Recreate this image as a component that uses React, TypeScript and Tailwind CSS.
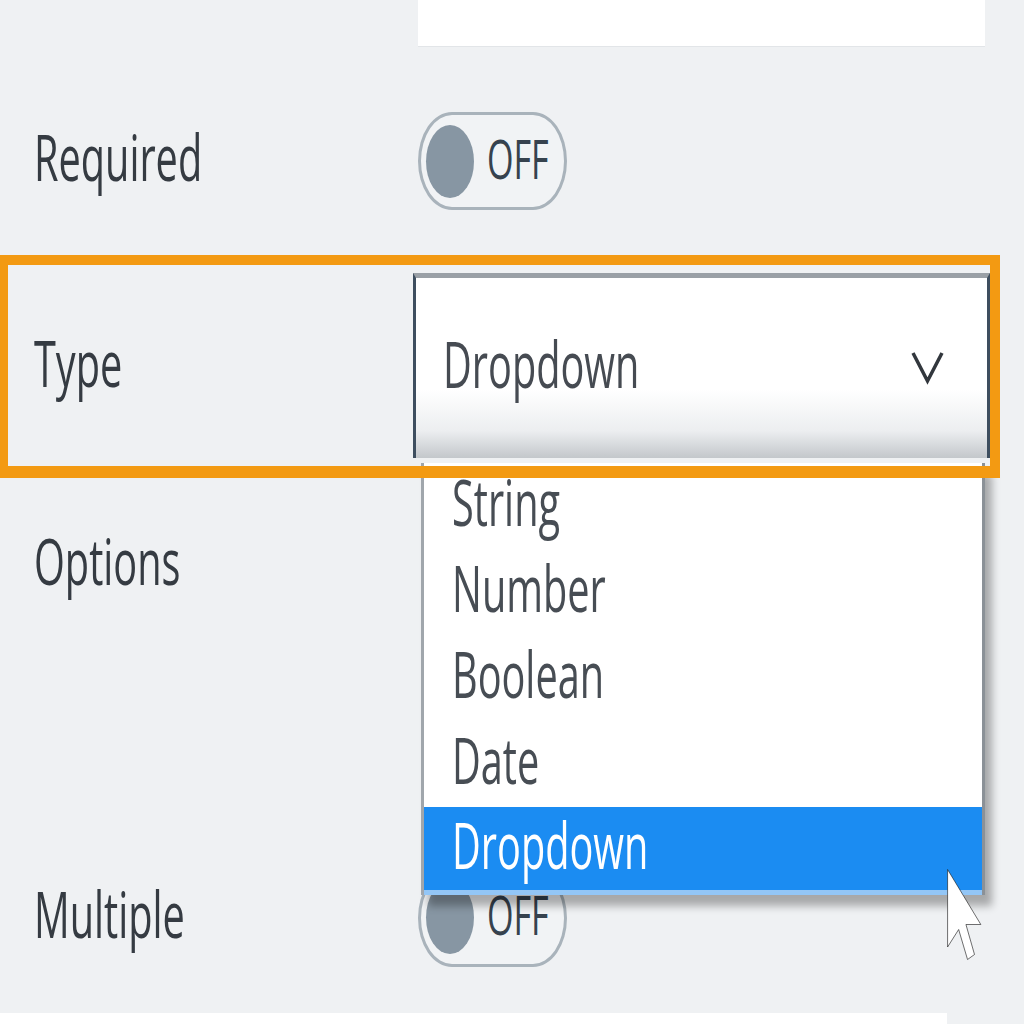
import React from "react";

const txt = "inline-block origin-left scale-x-[0.62] leading-none whitespace-nowrap -translate-y-[4px]";

function Toggle() {
  return (
    <div className="w-[149px] h-[98px] shrink-0 rounded-[34px/49px] border-[3px] border-[#a9b3bb] bg-[#f1f3f5] flex items-center pl-[5px] overflow-visible">
      <div className="w-[48px] h-[73px] shrink-0 rounded-[50%] bg-[#8796a3]" />
      <div className="w-0 ml-[13px]">
        <span className={`${txt} text-[55px] text-[#36424e]`}>OFF</span>
      </div>
    </div>
  );
}

function Label({ children }: { children: React.ReactNode }) {
  return (
    <div className="w-[418px] shrink-0 pl-[34px] flex items-center">
      <span className={`${txt} text-[64px] text-[#353b42]`}>{children}</span>
    </div>
  );
}

export default function App() {
  const items = ["String", "Number", "Boolean", "Date"];
  return (
    <div
      className="w-[1024px] h-[1024px] bg-[#eff1f3] overflow-hidden relative flex flex-col"
      style={{ fontFamily: '"Open Sans", "Noto Sans", sans-serif' }}
    >
      {/* top input */}
      <div className="h-[48px] pl-[418px] shrink-0">
        <div className="w-[567px] h-[47px] bg-white border-b border-[#e2e5e8]" />
      </div>

      {/* Required */}
      <div className="mt-[64px] h-[98px] flex items-center shrink-0">
        <Label>Required</Label>
        <Toggle />
      </div>

      {/* Type row with highlight */}
      <div className="mt-[45px] h-[223px] w-[1000px] relative flex shrink-0">
        <div className="w-[413px] shrink-0 pl-[34px] flex items-center">
          <span className={`${txt} text-[64px] text-[#353b42]`}>Type</span>
        </div>
        <div className="flex-1 mt-[18px] mb-[20px] mr-[10px] border-l-[3px] border-r-[3px] border-[#3e4e5f] border-t-[5px] border-t-[#9aa0a6] bg-gradient-to-b from-white from-[62%] via-[#eceef0] via-[85%] to-[#c3c7cb] flex items-center pl-[27px] pr-[43px]">
          <div className="flex-1">
            <span className={`${txt} text-[64px] text-[#464b52]`}>Dropdown</span>
          </div>
          <svg width="33" height="36" viewBox="0 0 33 36" className="-mt-[2px] shrink-0">
            <polyline points="2,4 16.5,32 31,4" fill="none" stroke="#32373d" strokeWidth="3.5" />
          </svg>
        </div>

        {/* dropdown menu */}
        <div className="absolute left-[421px] top-[208px] w-[564px] bg-white border-l-[3px] border-r-[3px] border-l-[#a0a6ac] border-r-[#8b9197] shadow-[7px_11px_8px_rgba(0,0,0,0.3)] z-10 flex flex-col">
          {items.map((it) => (
            <div key={it} className="h-[86px] flex items-center pl-[28px]">
              <span className={`${txt} text-[64px] text-[#474d54]`}>{it}</span>
            </div>
          ))}
          <div className="h-[88px] bg-[#1b8cf2] border-b-[5px] border-[#93c6f6] flex items-center pl-[28px]">
            <span className={`${txt} text-[64px] text-white`}>Dropdown</span>
          </div>
        </div>

        {/* orange annotation */}
        <div className="absolute inset-0 border-t-[10px] border-l-[8px] border-r-[10px] border-b-[12px] border-[#f39a12] pointer-events-none z-20" />
      </div>

      {/* Options */}
      <div className="mt-[44px] h-[86px] flex items-center shrink-0">
        <Label>Options</Label>
      </div>

      {/* Multiple */}
      <div className="mt-[260px] h-[99px] flex items-center shrink-0">
        <Label>Multiple</Label>
        <Toggle />
      </div>

      <div className="mt-[46px] h-[11px] w-[947px] bg-white shrink-0" />

      {/* cursor */}
      <svg
        className="absolute left-[946px] top-[867px] z-30"
        width="38"
        height="95"
        viewBox="0 0 12 19"
        preserveAspectRatio="none"
      >
        <path
          d="M0.5,0.5 L0.5,16 L4,12.5 L6.8,18.5 L9,17.5 L6.3,11.5 L11,11.5 Z"
          fill="white"
          stroke="#111"
          strokeWidth="0.6"
          vectorEffect="non-scaling-stroke"
        />
      </svg>
    </div>
  );
}
